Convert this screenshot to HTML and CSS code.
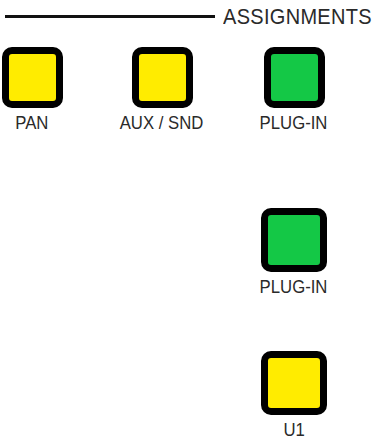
FILE: index.html
```html
<!DOCTYPE html>
<html lang="en">
<head>
    <meta charset="UTF-8">
    <meta name="viewport" content="width=device-width, initial-scale=1.0">
    <title>Assignments</title>
    <link rel="stylesheet" href="styles.css">
</head>
<body>
    <div class="header">
        <div class="rule"></div>
        <div class="title">ASSIGNMENTS</div>
    </div>
    <div class="row row-top">
        <div class="cell">
            <div class="key yellow"></div>
            <div class="label">PAN</div>
        </div>
        <div class="cell">
            <div class="key yellow"></div>
            <div class="label">AUX / SND</div>
        </div>
        <div class="cell">
            <div class="key green"></div>
            <div class="label">PLUG-IN</div>
        </div>
    </div>
    <div class="row row-mid">
        <div class="cell last">
            <div class="key green big"></div>
            <div class="label">PLUG-IN</div>
        </div>
    </div>
    <div class="row row-low">
        <div class="cell last">
            <div class="key yellow big"></div>
            <div class="label">U1</div>
        </div>
    </div>
</body>
</html>
```

FILE: styles.css
```css
body {
    margin: 0;
    padding: 0;
    background: #fff;
    font-family: "Liberation Sans", Arial, sans-serif;
    color: #2a2a2a;
    width: 372px;
    height: 448px;
    overflow: hidden;
}
.header {
    display: flex;
    align-items: center;
    padding: 4px 0 0 5px;
    height: 23px;
}
.rule {
    width: 210px;
    height: 3px;
    background: #111;
    margin-top: 2px;
}
.title {
    margin-left: 8px;
    font-size: 20px;
    line-height: 20px;
    letter-spacing: 0.3px;
    transform: scaleY(1.08);
}
.row {
    display: grid;
    grid-template-columns: 64px 64px 64px;
    column-gap: 67px;
}
.row-top {
    margin-top: 20px;
}
.row-mid {
    margin-top: 76px;
}
.row-low {
    margin-top: 55px;
}
.cell {
    display: flex;
    flex-direction: column;
    align-items: center;
}
.cell.last {
    grid-column: 3;
}
.row-top .cell:nth-child(2) {
    margin-left: -2px;
}
.key {
    box-sizing: border-box;
    width: 61px;
    height: 61px;
    border: 7px solid #000;
    border-radius: 10px;
}
.key.big {
    width: 66px;
    height: 64px;
}
.yellow {
    background: #ffec00;
}
.green {
    background: #14c846;
}
.label {
    margin-top: 5px;
    font-size: 19px;
    line-height: 19px;
    white-space: nowrap;
    transform: scaleX(0.88);
}
```
